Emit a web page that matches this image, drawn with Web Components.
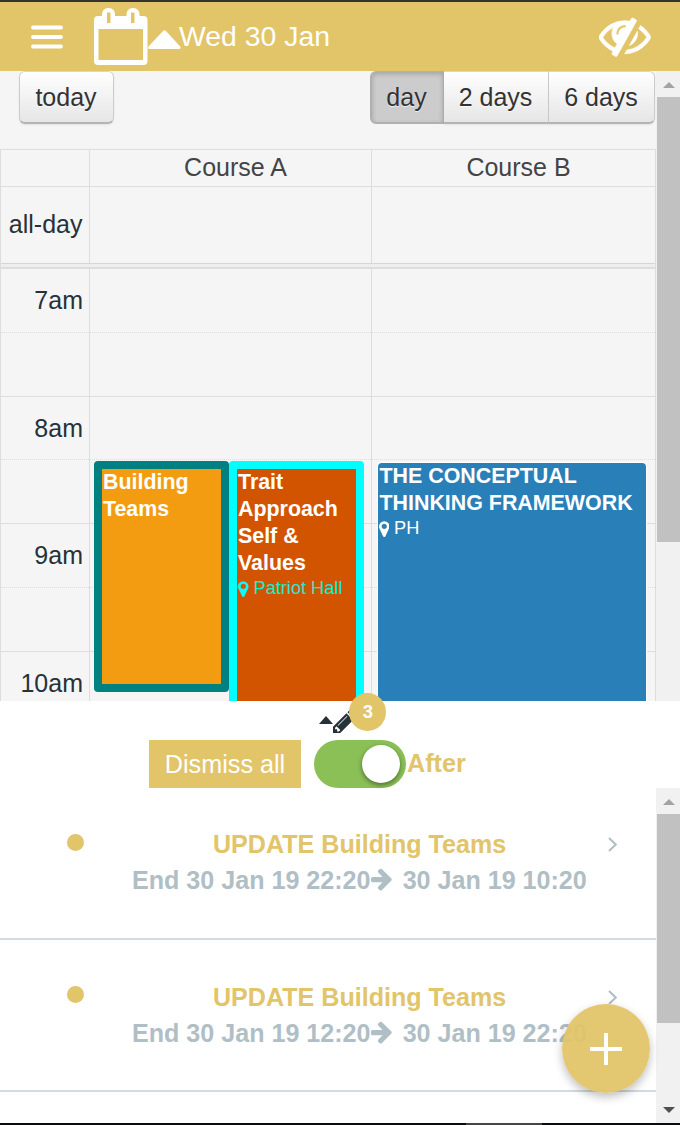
<!DOCTYPE html>
<html lang="en">
<head>
<meta charset="utf-8">
<title>Course planner</title>
<style>
html,body{margin:0;height:100%;background:#fff;font-family:"Liberation Sans",Arial,sans-serif;overflow:hidden}
</style>
</head>
<body>
<planner-app></planner-app>
<script>
const define = (name, markup) => {
  const t = document.createElement('template');
  t.innerHTML = markup;
  customElements.define(name, class extends HTMLElement {
    constructor() {
      super();
      this.attachShadow({mode: 'open'}).appendChild(t.content.cloneNode(true));
    }
  });
};

// name: [width, height, markup, optional viewBox]
const icons = {
  menu: [32, 24, '<path d="M2 2.500H30M2 12H30M2 21.500H30" stroke="currentColor" stroke-width="3.800" stroke-linecap="round"/>'],
  calendar: [54, 58, '<path fill="currentColor" fill-rule="evenodd" d="M4 8H8V6a6 6 0 0 1 6-6h1a6 6 0 0 1 6 6v2H32.500V6a6 6 0 0 1 6-6h1a6 6 0 0 1 6 6v2h4a4 4 0 0 1 4 4V53a4 4 0 0 1-4 4H4a4 4 0 0 1-4-4V12a4 4 0 0 1 4-4ZM4.500 21V52H49V21ZM13 4.500V15H16.500V4.500ZM37 4.500V15H40.500V4.500Z"/>'],
  caret: [33, 19, '<path fill="currentColor" d="M1.500 19a1.500 1.500 0 0 1-1-2.600L15 1a2.200 2.200 0 0 1 3 0L32.200 16.400a1.500 1.500 0 0 1-1 2.600Z"/>'],
  smallcaret: [14, 8, '<path fill="currentColor" d="M0 8 7 0 14 8Z"/>'],
  eyeoff: [51.5, 40.5, '<path fill="currentColor" d="M555 1335l78-141q-87-63-136-159t-49-203q0-121 61-225-229 117-381 353 167 258 427 375zm389-759q0-20-14-34t-34-14q-125 0-214.500 89.500t-89.500 214.500q0 20 14 34t34 14 34-14 14-34q0-86 61-147t147-61q20 0 34-14t14-34zm363-191q0 7-1 9-105 188-315 566t-316 567l-49 89q-10 16-28 16-12 0-134-70-16-10-16-28 0-12 44-87-143-65-263.500-173t-208.500-245q-20-31-20-69t20-69q153-235 380-371t496-136q89 0 180 17l54-97q10-16 28-16 5 0 18 6t31 15.500 33 18.500 31.500 18.500 19.500 11.500q16 10 16 27zm37 447q0 139-79 253.500t-209 164.500l280-502q8 45 8 84zm448 128q0 35-20 69-39 64-109 145-150 172-347.500 267t-419.500 95l74-132q212-18 392.500-137t301.500-307q-115-179-282-294l63-112q95 64 182.500 153t144.500 184q20 34 20 69z" stroke="currentColor" stroke-width="24"/>', '0 256 1792 1408'],
  pin: [10.5, 16, '<path fill="currentColor" d="M1152 640q0-106-75-181t-181-75-181 75-75 181 75 181 181 75 181-75 75-181zm256 0q0 109-33 179l-364 774q-16 33-47.500 52t-67.500 19-67.500-19-46.500-52l-365-774q-33-70-33-179 0-212 150-362t362-150 362 150 150 362z"/>', '384 128 1024 1536'],
  pencil: [24.5, 24.5, '<path fill="currentColor" d="M491 1536l91-91-235-235-91 91v107h128v128h107zm523-928q0-22-22-22-10 0-17 7l-542 542q-7 7-7 17 0 22 22 22 10 0 17-7l542-542q7-7 7-17zm-54-192l416 416-832 832h-416v-416zm683 96q0 53-37 90l-166 166-416-416 166-165q36-38 90-38 53 0 91 38l235 234q37 39 37 91z"/>', '128 149 1515 1515'],
  arrow: [21.6, 25.2, '<path fill="currentColor" d="M1472 960q0 54-37 91l-651 651q-39 37-91 37-51 0-90-37l-75-75q-38-38-38-91t38-91l293-293h-704q-52 0-84.500-37.500t-32.500-90.500v-128q0-53 32.500-90.500t84.500-37.500h704l-293-294q-38-36-38-90t38-90l75-75q38-38 90-38 53 0 91 38l651 651q37 35 37 90z"/>', '0 64 1536 1792'],
  chevron: [9, 15, '<path fill="none" stroke="currentColor" stroke-width="2" d="M1 1 7.700 7.500 1 14"/>'],
  plus: [32, 32, '<path d="M16 0V32M0 16H32" stroke="currentColor" stroke-width="4"/>'],
  up: [12, 6, '<path fill="currentColor" d="M0 6 6 0 12 6Z"/>'],
  down: [12, 6, '<path fill="currentColor" d="M0 0H12L6 6Z"/>']
};
customElements.define('ui-icon', class extends HTMLElement {
  constructor() { super(); this.attachShadow({mode: 'open'}); }
  connectedCallback() {
    const [w, h, body, box] = icons[this.getAttribute('name')];
    this.shadowRoot.innerHTML = `<style>:host{display:inline-block;flex:none;line-height:0}svg{display:block}</style><svg width="${w}" height="${h}" viewBox="${box || `0 0 ${w} ${h}`}">${body}</svg>`;
  }
});

define('app-header', `<style>
:host{display:flex;box-sizing:border-box;height:71px;border-top:2px solid #333;background:#e2c469;color:#fff;padding:0 29.500px 0 31px}
.menu{margin-top:22.500px}.cal{margin:6px 0 0 31px}.caret{margin:28px 0 0}
span{font-size:28.400px;line-height:34px;margin-top:17px;margin-left:-2px;white-space:nowrap}
.eye{margin:14.500px 0 0 auto}
</style><ui-icon class="menu" name="menu"></ui-icon><ui-icon class="cal" name="calendar"></ui-icon><ui-icon class="caret" name="caret"></ui-icon><span><slot></slot></span><ui-icon class="eye" name="eyeoff"></ui-icon>`);

define('scroll-bar', `<style>
:host{display:flex;flex-direction:column;width:24px;background:#f1f1f1;flex:none}
.u,.d{height:26px;display:flex;align-items:center;justify-content:center;color:#a3a3a3;flex:none;padding:2px 0 0 1px;box-sizing:border-box}
.t{height:var(--thumb);background:#c1c1c1;margin-left:1px}
.d{margin-top:auto;color:#505050;padding:0 0 0 1px}
:host([top-only]) .d{display:none}
</style><div class="u"><ui-icon name="up"></ui-icon></div><div class="t"></div><div class="d"><ui-icon name="down"></ui-icon></div>`);

define('view-buttons', `<style>
:host{display:flex;justify-content:space-between;padding:0 1px 0 19px;height:78px;box-sizing:border-box;color:#333;font-size:25px}
div{display:flex}
button{all:unset;box-sizing:border-box;height:53px;border:1px solid #ccc;border-color:#d6d6d6 #ccc #b4b4b4;line-height:50px;border-width:1px 1px 2px;background:linear-gradient(#fff,#e6e6e6);text-shadow:0 1px 1px rgba(255,255,255,.75);box-shadow:inset 0 1px 0 #fff,0 1px 2px rgba(0,0,0,.08);text-align:center;padding-right:1px}
.today{border-radius:6px;width:95px}
.g button{border-left-width:0}
.g .a{background:#ccc;border-color:#b0b0b0;border-left-width:2px;border-right-width:1px;border-radius:6px 0 0 6px;box-shadow:inset 0 2px 5px rgba(0,0,0,.2);width:74px;padding-right:2px}
.g .b{width:105px}.g .c{width:106px;border-radius:0 6px 6px 0}
</style><button class="today">today</button><div class="g"><button class="a">day</button><button class="b">2 days</button><button class="c">6 days</button></div>`);

define('cal-event', `<style>
:host{display:block;box-sizing:border-box;border:var(--bw,8px) solid var(--line);background:var(--fill);border-radius:4px;color:#fff;padding:0 1.500px;flex:none}
b{display:block;font-size:21.400px;line-height:27px}
slot[name=place]{font-size:18.200px;line-height:23px;color:var(--place,#fff)}
</style><b><slot></slot></b><slot name="place"></slot>`);

define('event-place', `<style>
:host{display:flex;align-items:center;gap:5px;white-space:nowrap;margin-left:var(--shift,0)}
ui-icon{color:var(--pin,#fff)}
</style><ui-icon name="pin"></ui-icon><span><slot></slot></span>`);

define('day-calendar', `<style>
:host{display:block;width:656px;height:630px;overflow:hidden;background:#f5f5f5;color:#263238;font-size:25px}
.frame{width:656px;box-sizing:border-box;border:1px solid #ddd;border-bottom:0}
.row{display:grid;grid-template-columns:88px 282px 1fr}
.row>*{box-sizing:border-box;border-left:1px solid #ddd}.row>:first-child{border-left:0}
.head{height:36px;color:#444;text-align:center;line-height:35px}
.head>*+*{padding-left:10px}
.all{height:76px;border-top:1px solid #ddd;line-height:75px}
.all>:first-child{text-align:right;padding-right:6.500px}
.div{height:6px;box-sizing:border-box;background:#eee;border-top:1px solid #d6d6d6;border-bottom:2px solid #ddd}
.body{display:grid;height:440px;margin-top:-1px}
.body>*{grid-area:1/1}
.slots{display:grid;grid-auto-rows:63.800px}
.slots div{box-sizing:border-box;border-top:1px solid #ddd;text-align:right;padding-right:572px;line-height:62px;white-space:nowrap}
.slots div:first-child{border-top-color:transparent}
.slots div:nth-child(even){border-top:1px dotted #ddd}
.ev{display:flex;align-items:flex-start;padding:193px 0 0 3.500px}
.e1{width:135px;height:231px;--line:#008080;--fill:#f39c12}
.e2{width:135px;height:300px;--line:#0ff;--fill:#d35400;--place:#1de9d0;--pin:#0ff}
.e3{width:268px;height:300px;--bw:0;--fill:#2980b9;--shift:-1px;margin:2px 0 0 2.500px;box-shadow:0 0 0 1px #fff}
</style>
<view-buttons></view-buttons>
<div class="frame">
<div class="row head"><div></div><div>Course A</div><div>Course B</div></div>
<div class="row all"><div>all-day</div><div></div><div></div></div>
<div class="div"></div>
<div class="body">
<div class="slots"><div>7am</div><div></div><div>8am</div><div></div><div>9am</div><div></div><div>10am</div></div>
<div class="row"><div></div>
<div class="ev"><cal-event class="e1">Building Teams</cal-event><cal-event class="e2">Trait Approach Self &amp; Values<event-place slot="place">Patriot Hall</event-place></cal-event></div>
<div class="ev"><cal-event class="e3">THE CONCEPTUAL THINKING FRAMEWORK<event-place slot="place">PH</event-place></cal-event></div>
</div></div></div>`);

define('toggle-switch', `<style>
:host{display:flex;box-sizing:border-box;width:92px;height:48px;border-radius:24px;background:#8bc057;padding:5px 6px;justify-content:flex-end}
i{width:38px;height:38px;border-radius:50%;background:#fff;box-shadow:0 2px 5px rgba(0,0,0,.45)}
</style><i></i>`);

define('change-panel', `<style>
:host{display:block;height:87px;background:#fff;font-size:25px}
.tab{height:39px;position:relative;color:#263238;display:flex;padding-left:319px}
.tab ui-icon{margin-top:15px}.tab ui-icon+ui-icon{margin-top:7.500px}
.badge{position:absolute;left:349px;top:-8px;width:37px;height:38px;border-radius:50%;background:#e2c469;color:#fff;font-weight:bold;font-size:18.500px;line-height:38px;text-align:center;text-indent:1px}
.row{display:flex;padding-left:149px;height:48px;color:#e2c469}
button{all:unset;width:152px;height:48px;background:#e2c469;color:#fff;text-align:center;line-height:46px;font-size:25.200px;margin-right:13px}
b{line-height:46px;margin-left:1px;font-size:25.200px}
</style><div class="tab"><ui-icon name="smallcaret"></ui-icon><ui-icon name="pencil"></ui-icon><span class="badge">3</span></div>
<div class="row"><button>Dismiss all</button><toggle-switch></toggle-switch><b>After</b></div>`);

define('change-item', `<style>
:host{display:grid;grid-template-columns:67px 17px 1fr;box-sizing:border-box;height:152px;border-bottom:2px solid #d2dbdf;font-weight:bold;font-size:25.100px;color:#b0bec5}
i{grid-column:2;width:17px;height:17px;border-radius:50%;background:#e2c469;margin-top:46px}
.c{padding:var(--inset,38px) 0 0 48px}
.t{display:flex;align-items:center;height:36px;color:#e2c469;padding-left:81px;white-space:nowrap}
.t ui-icon{margin-left:101.500px;color:#b0bec5}
.w{display:flex;align-items:center;height:36px;white-space:nowrap}.w ui-icon{margin-right:10.500px}
</style><i></i><div class="c"><div class="t"><slot></slot><ui-icon name="chevron"></ui-icon></div><div class="w"><slot name="from"></slot><ui-icon name="arrow"></ui-icon><slot name="to"></slot></div></div>`);

define('add-button', `<style>
:host{position:absolute;left:562px;top:1004px;width:88px;height:89px;border-radius:50%;background:rgba(226,196,105,.95);color:#fff;display:flex;align-items:center;justify-content:center;box-shadow:0 4px 10px rgba(0,0,0,.26)}
</style><ui-icon name="plus"></ui-icon>`);

define('planner-app', `<style>
:host{display:block;position:relative;width:680px;height:1125px;overflow:hidden;background:#fff}
.cal{display:flex;height:630px}.cal scroll-bar{--thumb:445px}
.list{display:flex;height:335px}.list>div{width:656px;overflow:hidden}.list scroll-bar{--thumb:209px}
change-item+change-item{--inset:39px}
.foot{height:2px;background:#0a0c0e;display:flex}.foot i{width:76px;margin-left:466px;background:#444}
</style>
<app-header>Wed 30 Jan</app-header>
<div class="cal"><day-calendar></day-calendar><scroll-bar top-only></scroll-bar></div>
<change-panel></change-panel>
<div class="list"><div>
<change-item>UPDATE Building Teams<span slot="from">End 30 Jan 19 22:20</span><span slot="to">30 Jan 19 10:20</span></change-item>
<change-item>UPDATE Building Teams<span slot="from">End 30 Jan 19 12:20</span><span slot="to">30 Jan 19 22:20</span></change-item>
</div><scroll-bar></scroll-bar></div>
<div class="foot"><i></i></div>
<add-button></add-button>`);
</script>
</body>
</html>
